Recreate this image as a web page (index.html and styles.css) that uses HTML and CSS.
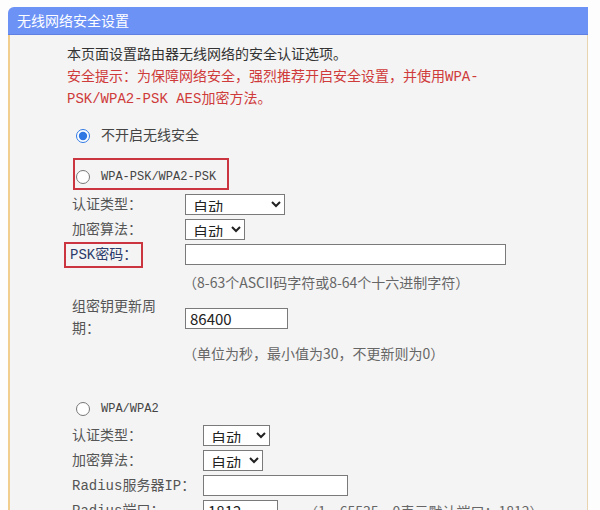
FILE: index.html
```html
<!DOCTYPE html>
<html lang="zh-CN">
<head>
  <meta charset="UTF-8">
  <meta name="viewport" content="width=device-width, initial-scale=1.0">
  <title>无线网络安全设置</title>
  <link rel="stylesheet" href="styles.css">
</head>
<body>
  <div class="panel">
    <div class="panel-title">无线网络安全设置</div>
    <div class="panel-body">
      <div class="intro">
        <p>本页面设置路由器无线网络的安全认证选项。</p>
        <p class="warn">安全提示：为保障网络安全，强烈推荐开启安全设置，并使用WPA-PSK/WPA2-PSK AES加密方法。</p>
      </div>

      <div class="option first">
        <label class="radio"><input type="radio" name="secType" checked><span>不开启无线安全</span></label>
      </div>

      <div class="option boxed">
        <label class="radio marked"><input type="radio" name="secType"><span class="latin">WPA-PSK/WPA2-PSK</span></label>
      </div>
      <div class="fields">
        <div class="row">
          <span class="label">认证类型：</span>
          <select class="sel-wide"><option>自动</option><option>WPA-PSK</option><option>WPA2-PSK</option></select>
        </div>
        <div class="row">
          <span class="label">加密算法：</span>
          <select class="sel-narrow"><option>自动</option><option>TKIP</option><option>AES</option></select>
        </div>
        <div class="row">
          <span class="label"><span class="marked">PSK密码：</span></span>
          <input type="text" class="inp-long">
        </div>
        <div class="row hint-row">
          <span class="label"></span>
          <span class="hint">（8-63个ASCII码字符或8-64个十六进制字符）</span>
        </div>
        <div class="row tall">
          <span class="label"><span class="wrap">组密钥更新周期：</span></span>
          <input type="text" class="inp-short" value="86400">
        </div>
        <div class="row hint-row">
          <span class="label"></span>
          <span class="hint">（单位为秒，最小值为30，不更新则为0）</span>
        </div>
      </div>

      <div class="option spaced">
        <label class="radio"><input type="radio" name="secType"><span class="latin">WPA/WPA2</span></label>
      </div>
      <div class="fields wide-labels">
        <div class="row">
          <span class="label">认证类型：</span>
          <select class="sel-mid"><option>自动</option><option>WPA</option><option>WPA2</option></select>
        </div>
        <div class="row">
          <span class="label">加密算法：</span>
          <select class="sel-narrow"><option>自动</option><option>TKIP</option><option>AES</option></select>
        </div>
        <div class="row">
          <span class="label">Radius服务器IP：</span>
          <input type="text" class="inp-ip">
        </div>
        <div class="row">
          <span class="label">Radius端口：</span>
          <input type="text" class="inp-port" value="1812">
          <span class="hint inline">（1－65535，0表示默认端口：1812）</span>
        </div>
      </div>
    </div>
  </div>
</body>
</html>
```

FILE: styles.css
```css
html, body {
  overflow: hidden;
}

body {
  margin: 0;
  background-color: #fdfdfd;
  font-family: "Liberation Mono", "Noto Sans CJK SC", monospace;
  font-size: 14px;
  color: #333;
}

.panel {
  width: 580px;
  margin: 7px 0 0 8px;
}

.panel-title {
  height: 27px;
  line-height: 27px;
  padding-left: 9px;
  background-color: #6c92f6;
  border-bottom: 1px solid #5d80e2;
  border-top-left-radius: 6px;
  color: #fff;
  font-family: "Noto Sans CJK SC", sans-serif;
  font-size: 14px;
}

.panel-body {
  background-color: #f4f4f4;
  border-left: 2px solid #f1cd8e;
  border-right: 1px solid #e9d4b0;
  padding: 9px 0 40px 57px;
  min-height: 600px;
}

.intro {
  width: 425px;
}

.intro p {
  margin: 0;
  line-height: 22px;
}

.warn {
  color: #cf3a3a;
}

.option {
  margin: 12px 0 0 6px;
  height: 24px;
  display: flex;
  align-items: center;
}

.option.first {
  margin-top: 14px;
}

.option.boxed {
  height: auto;
  margin-top: 10px;
}

.option.spaced {
  margin-top: 33px;
}

.radio {
  display: inline-flex;
  align-items: center;
  border: 2px solid transparent;
  padding: 0 11px 0 1px;
  line-height: 18px;
  color: #444;
}

.radio input {
  width: 14px;
  height: 14px;
  margin: 0 11px 0 0;
  accent-color: #2f78e4;
}

.radio .latin {
  font-size: 12px;
}

.boxed .radio {
  padding: 8px 11px 2px 1px;
}

.marked {
  border: 2px solid #cb3540 !important;
}

.fields {
  margin: 2px 0 0 5px;
}

.row {
  display: flex;
  align-items: center;
  height: 25px;
}

.row.tall {
  height: 44px;
  margin-top: 3px;
}

.row.hint-row {
  height: 22px;
  margin-top: 4px;
}

.row.tall + .hint-row {
  margin-top: 2px;
}

.label {
  width: 113px;
  flex-shrink: 0;
  color: #555;
  line-height: 22px;
}

.wide-labels .label {
  width: 131px;
}

.label .marked {
  display: inline-block;
  margin-left: -8px;
  padding: 0 4px;
  height: 22px;
  line-height: 22px;
  color: #2a3a6a;
}

.label .wrap {
  display: block;
  width: 100px;
}

.hint {
  color: #666;
  font-family: "Noto Sans CJK SC", sans-serif;
  font-size: 14px;
  margin-left: -2px;
}

.hint.inline {
  margin-left: 26px;
}

select,
input[type="text"] {
  box-sizing: border-box;
  height: 21px;
  border: 1px solid #7a7a7a;
  border-radius: 0;
  background-color: #fff;
  font-family: "Noto Sans CJK SC", "Liberation Sans", sans-serif;
  font-size: 15px;
  line-height: 19px;
  color: #222;
  padding: 0 4px;
}

select {
  padding: 0 1px 2px 3px;
}

.sel-wide { width: 100px; }
.sel-narrow { width: 60px; }
.sel-mid { width: 67px; }
.inp-long { width: 321px; }
.inp-short { width: 103px; }
.inp-ip { width: 145px; }
.inp-port { width: 75px; }
```
